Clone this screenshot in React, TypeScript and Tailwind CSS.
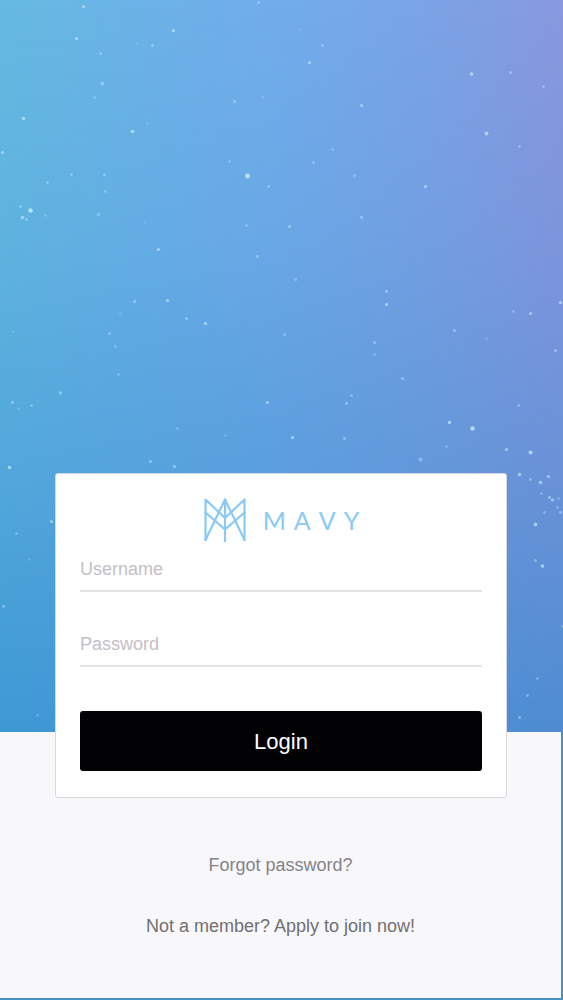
import { useState } from 'react';

// [x, y, radius, opacity] on a 563 x 732 canvas
const STARS: [number, number, number, number][] = [
  [83, 6, 1.6, 0.6], [76, 38, 1.6, 0.7], [100, 53, 1.3, 0.5], [173, 30, 1.6, 0.7], [152, 45, 1.4, 0.5],
  [137, 43, 1, 0.4], [102, 83, 1.6, 0.6], [94, 97, 1.3, 0.4], [23, 118, 1.8, 0.7], [132, 131, 1.7, 0.75],
  [147, 123, 1.1, 0.4], [2, 152, 1.6, 0.6], [234, 101, 1.7, 0.4], [262, 97, 1, 0.4], [258, 2, 1.3, 0.45],
  [229, 161, 1.2, 0.4], [247, 175.5, 2.4, 0.85], [268, 186, 1.3, 0.5], [71, 174, 1.3, 0.45], [104, 174.5, 1.4, 0.45],
  [47, 182, 1.3, 0.45], [105, 191, 1.2, 0.45], [20, 206, 1.3, 0.5], [30, 210, 2.2, 0.85], [22, 217, 1.8, 0.6],
  [26, 219, 1.2, 0.55], [45, 215, 1.2, 0.35], [98, 214, 1.8, 0.35], [144, 222, 1.2, 0.2], [246, 225, 1.2, 0.45],
  [299, 29, 1, 0.3], [322, 45, 1.5, 0.4], [309, 62, 1.6, 0.65], [361, 105, 1.5, 0.6], [471, 73.5, 1.8, 0.7],
  [510, 72, 1.4, 0.5], [543, 86, 1.4, 0.4], [486, 133, 1.9, 0.7], [519, 146, 1.3, 0.45], [332, 149, 1.6, 0.3],
  [313, 162, 1.3, 0.5], [354, 175, 1.3, 0.45], [425, 186, 1.6, 0.65], [361, 217, 1.4, 0.5], [289, 226, 1.4, 0.55],
  [158, 249, 1.6, 0.65], [257, 256, 1.4, 0.5], [134, 301, 1.5, 0.5], [167, 300, 1.6, 0.65], [186, 318, 1.5, 0.5],
  [205, 323, 1.6, 0.65], [109, 333, 1.4, 0.4], [115, 346, 1.3, 0.4], [13, 331, 1.1, 0.35], [118, 374, 1.3, 0.4],
  [120, 313, 1.5, 0.2], [60, 392.5, 1.8, 0.45], [12, 402, 1.4, 0.5], [31, 405, 1.4, 0.35], [18, 408, 1.2, 0.3],
  [267, 402, 1.6, 0.6], [177, 428, 1.5, 0.3], [225, 435, 1, 0.4], [9, 467, 1.8, 0.7], [150, 461, 1.6, 0.45],
  [174, 466, 1.6, 0.5], [295, 279, 1.6, 0.35], [386, 291, 1.4, 0.55], [386, 304, 1.6, 0.65], [284, 334, 1.7, 0.3],
  [374, 342, 1.5, 0.45], [374, 354, 1.5, 0.3], [402, 378, 1.6, 0.4], [454, 330, 1.4, 0.5], [486, 338, 1.1, 0.35],
  [513, 311, 1.2, 0.45], [530, 313, 1.5, 0.6], [560, 302, 1.6, 0.65], [555, 350, 1.5, 0.5], [351, 395, 1.3, 0.45],
  [346, 403, 1.4, 0.5], [449, 422, 1.7, 0.7], [472, 428, 2.2, 0.8], [518, 405, 1.4, 0.4], [344, 438, 1.4, 0.45],
  [292, 437, 1.7, 0.6], [446, 446, 1.3, 0.4], [420, 459, 1.9, 0.4], [506, 449, 1.6, 0.6], [530, 452, 1.9, 0.75],
  [519, 474, 1.7, 0.65], [530, 479, 1.3, 0.5], [548, 476, 1.6, 0.6], [540, 482, 1.7, 0.65], [541, 493, 1.3, 0.4],
  [549, 497, 1.5, 0.55], [552, 499.5, 1.6, 0.6], [558, 498, 1.2, 0.4], [544, 512, 1.4, 0.35], [557, 507, 1.3, 0.4],
  [560, 512, 1.4, 0.45], [535, 524, 1.8, 0.75], [535, 560, 1.5, 0.4], [542, 565.5, 1.8, 0.7], [562, 626, 1.3, 0.4],
  [537, 678, 1.3, 0.45], [527, 695, 1.4, 0.4], [519, 717, 1.4, 0.45], [51, 521, 1.6, 0.6], [16, 533, 1.3, 0.4],
  [29, 559, 1.1, 0.3], [3, 606, 1.4, 0.45], [37, 715, 1.2, 0.35],
];

function Sky() {
  return (
    <svg
      className="absolute inset-0 h-full w-full"
      viewBox="0 0 563 732"
      preserveAspectRatio="none"
      aria-hidden="true"
    >
      <defs>
        <linearGradient id="sky-top" x1="0" y1="0" x2="1" y2="0.06">
          <stop offset="0" stopColor="#66bae1" />
          <stop offset="0.25" stopColor="#6cb3e8" />
          <stop offset="0.5" stopColor="#72adeb" />
          <stop offset="0.75" stopColor="#7ba4e6" />
          <stop offset="1" stopColor="#8998df" />
        </linearGradient>
        <linearGradient id="sky-bottom" x1="0" y1="0" x2="1" y2="0">
          <stop offset="0" stopColor="#3e98d4" />
          <stop offset="1" stopColor="#4e8cd1" />
        </linearGradient>
        <linearGradient id="sky-fade" x1="0" y1="0" x2="0" y2="1">
          <stop offset="0" stopColor="#000" />
          <stop offset="0.33" stopColor="#333" />
          <stop offset="0.65" stopColor="#888" />
          <stop offset="1" stopColor="#fff" />
        </linearGradient>
        <mask id="sky-mask">
          <rect width="563" height="732" fill="url(#sky-fade)" />
        </mask>
      </defs>
      <rect width="563" height="732" fill="url(#sky-top)" />
      <rect width="563" height="732" fill="url(#sky-bottom)" mask="url(#sky-mask)" />
      {STARS.map(([x, y, r, opacity]) => (
        <circle key={`${x}-${y}`} cx={x + 0.5} cy={y + 0.5} r={r} fill="#c8ebff" opacity={opacity} />
      ))}
    </svg>
  );
}

function Logo() {
  return (
    <div className="flex h-11 items-center justify-center gap-4 text-[#8ccaf5]" role="img" aria-label="Mavy">
      <svg
        className="h-11 w-11"
        viewBox="0 0 44 44"
        fill="none"
        stroke="#8ac8f5"
        strokeWidth="2.2"
        strokeLinejoin="round"
        strokeLinecap="round"
        aria-hidden="true"
      >
        <path d="M2.5 42V1.5L22 20L41.5 1.5V42" />
        <path d="M2.5 42L22 1.5L41.5 42" />
        <path d="M22 1.5V43" />
        <path d="M2.5 14.5L22 31.5L41.5 14.5" />
      </svg>
      <div className="flex gap-2 font-['Lato',sans-serif] text-[25px] leading-8" aria-hidden="true">
        <span>M</span>
        <span>A</span>
        <span>V</span>
        <span>Y</span>
      </div>
    </div>
  );
}

interface FieldProps {
  readonly id: string;
  readonly label: string;
  readonly type: string;
  readonly value: string;
  readonly onChange: (value: string) => void;
}

function Field({ id, label, type, value, onChange }: FieldProps) {
  return (
    <input
      id={id}
      name={id}
      type={type}
      value={value}
      placeholder={label}
      aria-label={label}
      onChange={(e) => onChange(e.target.value)}
      className="block h-[50px] w-full border-b-2 border-[#e4e3e6] bg-transparent pt-1.5 text-lg text-gray-700 outline-none placeholder:text-[#c2c0c5]"
    />
  );
}

export default function App() {
  const [username, setUsername] = useState('');
  const [password, setPassword] = useState('');

  return (
    <main className="flex min-h-screen flex-col bg-[#f8f7fa] font-['Liberation_Sans',Arial,sans-serif]">
      <div className="relative min-h-[280px] flex-1">
        <Sky />
      </div>

      <div className="border-r-2 border-b-2 border-[#4592c2]">
        <form
          className="relative -mt-[259px] mr-[54px] ml-[55px] rounded-[3px] border border-[#d8d8dc] bg-white px-6 pt-6 pb-[26px]"
          onSubmit={(e) => e.preventDefault()}
        >
          <Logo />
          <div className="flex flex-col gap-[25px]">
            <Field id="username" label="Username" type="text" value={username} onChange={setUsername} />
            <Field id="password" label="Password" type="password" value={password} onChange={setPassword} />
          </div>
          <button type="submit" className="mt-11 h-[60px] w-full rounded-[3px] bg-[#020104] text-[22px] text-white">
            Login
          </button>
        </form>

        <nav className="flex flex-col items-center gap-[37px] pt-[55px] pb-[60px] text-lg leading-6">
          <a href="#forgot" className="text-[#858487]">
            Forgot password?
          </a>
          <a href="#apply" className="text-[#706f72]">
            Not a member? Apply to join now!
          </a>
        </nav>
      </div>
    </main>
  );
}
